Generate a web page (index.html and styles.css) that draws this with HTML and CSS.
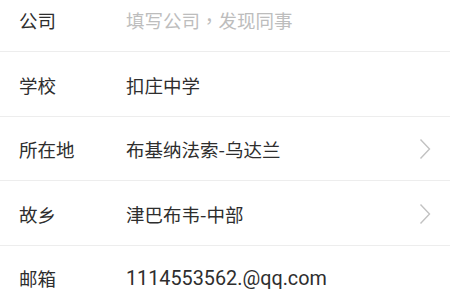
FILE: index.html
```html
<!DOCTYPE html>
<html lang="zh-CN">
<head>
<meta charset="utf-8">
<title>资料</title>
<link rel="stylesheet" href="styles.css">
</head>
<body>
<div class="list">
  <div class="row">
    <span class="label">公司</span>
    <span class="value placeholder">填写公司<span class="comma" lang="zh-TW">，</span>发现同事</span>
  </div>
  <div class="row">
    <span class="label">学校</span>
    <span class="value">扣庄中学</span>
  </div>
  <div class="row">
    <span class="label">所在地</span>
    <span class="value">布基纳法索-乌达兰</span>
    <svg class="chev" width="12" height="22" viewBox="0 0 12 22"><polyline points="1.5,1.5 10.5,11 1.5,20.5" fill="none" stroke="#c2c2c2" stroke-width="1.4"/></svg>
  </div>
  <div class="row">
    <span class="label">故乡</span>
    <span class="value">津巴布韦-中部</span>
    <svg class="chev" width="12" height="22" viewBox="0 0 12 22"><polyline points="1.5,1.5 10.5,11 1.5,20.5" fill="none" stroke="#c2c2c2" stroke-width="1.4"/></svg>
  </div>
  <div class="row">
    <span class="label">邮箱</span>
    <span class="value latin">1114553562.@qq.com</span>
  </div>
</div>
</body>
</html>
```

FILE: styles.css
```css
html, body {
  margin: 0;
  padding: 0;
  background: #ffffff;
  overflow: hidden;
}
body {
  font-family: Roboto, "Noto Sans CJK SC", sans-serif;
  color: #333333;
}
.list {
  margin-top: -12.5px;
}
.row {
  display: flex;
  align-items: center;
  box-sizing: border-box;
  height: 64.5px;
  padding: 2px 19px 0 19px;
  border-bottom: 1px solid #ededed;
}
.label {
  width: 107px;
  flex: none;
  font-size: 18.5px;
  font-family: "Noto Sans CJK SC", sans-serif;
  color: #2e2e2e;
}
.value {
  flex: 1;
  font-size: 18.5px;
  font-family: "Noto Sans CJK SC", sans-serif;
  color: #2e2e2e;
  white-space: nowrap;
}
.value.placeholder {
  color: #bdbdbd;
}
.comma {
  font-family: "Noto Sans CJK TC", sans-serif;
}
.value.latin {
  font-family: Roboto, sans-serif;
  font-size: 19.8px;
}
.chev {
  flex: none;
  display: block;
}
```
